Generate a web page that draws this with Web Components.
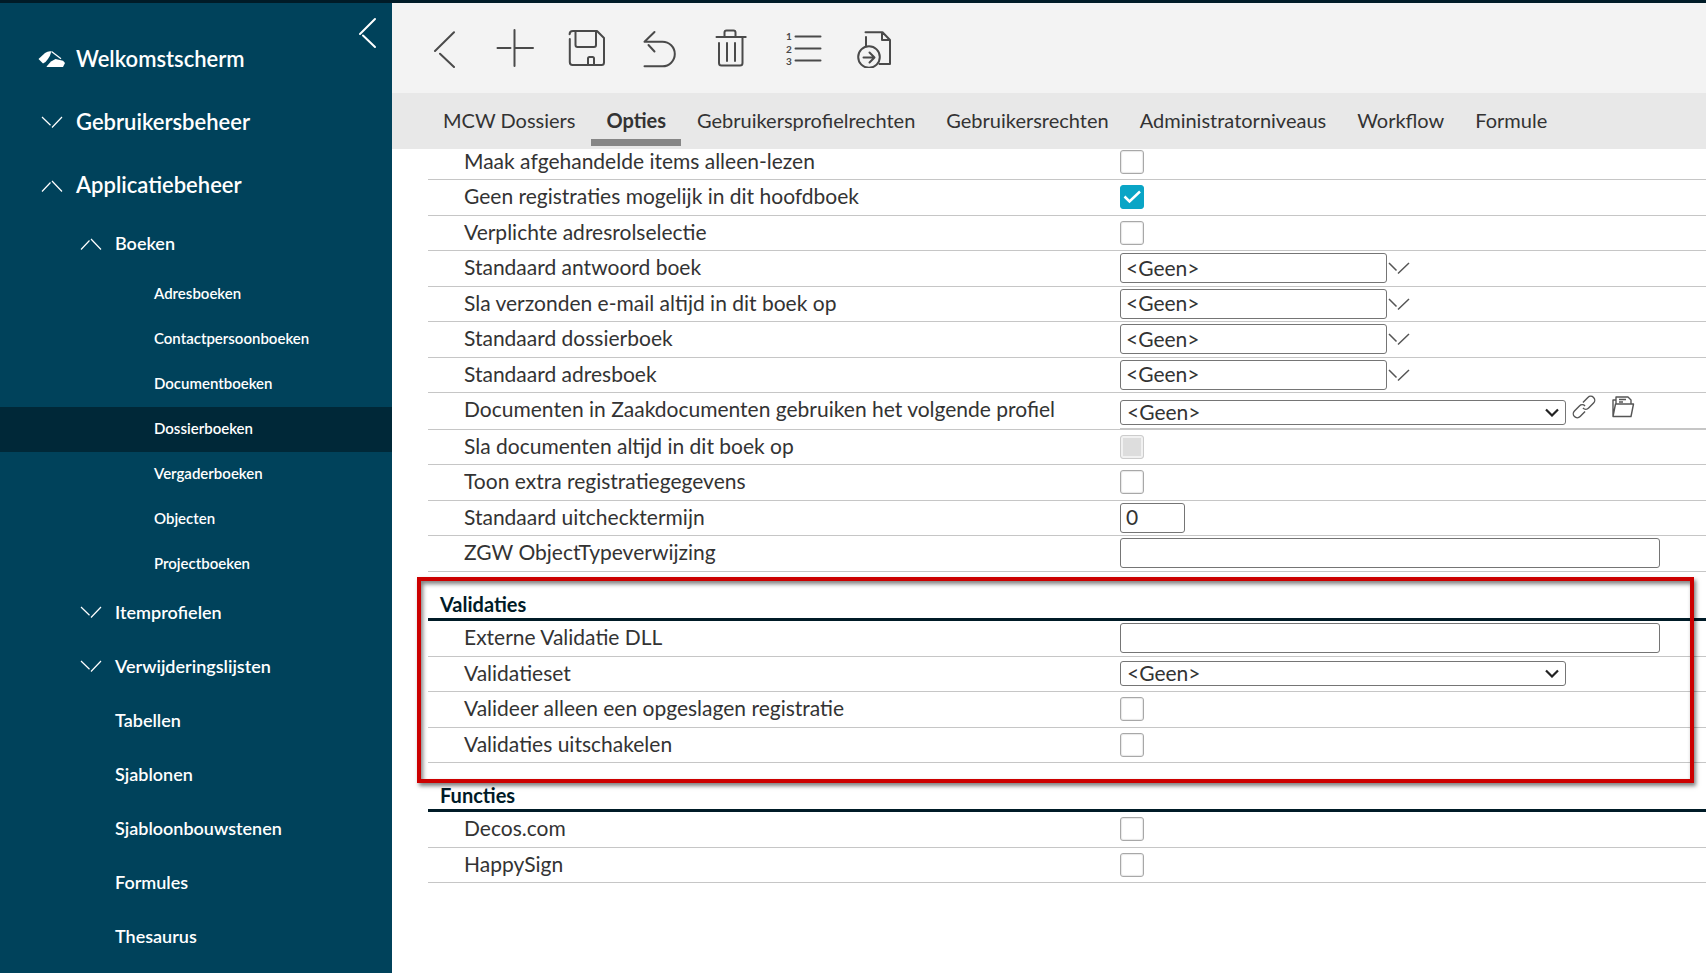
<!DOCTYPE html>
<html lang="nl">
<head>
<meta charset="utf-8">
<title>Dossierboeken - Opties</title>
<style>
  body { margin: 0; font-family: Lato, "Liberation Sans", sans-serif; color: #333; background: #fff; }
</style>
</head>
<body>
<app-shell>
  <side-nav slot="nav">
    <nav-item level="1" mark="logo">Welkomstscherm</nav-item>
    <nav-item level="1" mark="down">Gebruikersbeheer</nav-item>
    <nav-item level="1" mark="up">Applicatiebeheer</nav-item>
    <nav-item level="2" mark="up">Boeken</nav-item>
    <nav-item level="3">Adresboeken</nav-item>
    <nav-item level="3">Contactpersoonboeken</nav-item>
    <nav-item level="3">Documentboeken</nav-item>
    <nav-item level="3" active>Dossierboeken</nav-item>
    <nav-item level="3">Vergaderboeken</nav-item>
    <nav-item level="3">Objecten</nav-item>
    <nav-item level="3">Projectboeken</nav-item>
    <nav-item level="2" mark="down">Itemprofielen</nav-item>
    <nav-item level="2" mark="down">Verwijderingslijsten</nav-item>
    <nav-item level="2">Tabellen</nav-item>
    <nav-item level="2">Sjablonen</nav-item>
    <nav-item level="2">Sjabloonbouwstenen</nav-item>
    <nav-item level="2">Formules</nav-item>
    <nav-item level="2">Thesaurus</nav-item>
  </side-nav>
  <tool-bar slot="tools">
    <tool-button icon="back" label="Terug"></tool-button>
    <tool-button icon="plus" label="Nieuw"></tool-button>
    <tool-button icon="save" label="Opslaan"></tool-button>
    <tool-button icon="undo" label="Ongedaan maken"></tool-button>
    <tool-button icon="trash" label="Verwijderen"></tool-button>
    <tool-button icon="list" label="Volgorde"></tool-button>
    <tool-button icon="export" label="Exporteren"></tool-button>
  </tool-bar>
  <tab-bar slot="tabs">
    <tab-item>MCW Dossiers</tab-item>
    <tab-item active>Opties</tab-item>
    <tab-item>Gebruikersprofielrechten</tab-item>
    <tab-item>Gebruikersrechten</tab-item>
    <tab-item>Administratorniveaus</tab-item>
    <tab-item>Workflow</tab-item>
    <tab-item>Formule</tab-item>
  </tab-bar>
  <option-section>
    <field-row type="check" label="Maak afgehandelde items alleen-lezen"></field-row>
    <field-row type="check" checked label="Geen registraties mogelijk in dit hoofdboek"></field-row>
    <field-row type="check" label="Verplichte adresrolselectie"></field-row>
    <field-row type="lookup" value="&lt;Geen&gt;" label="Standaard antwoord boek"></field-row>
    <field-row type="lookup" value="&lt;Geen&gt;" label="Sla verzonden e-mail altijd in dit boek op"></field-row>
    <field-row type="lookup" value="&lt;Geen&gt;" label="Standaard dossierboek"></field-row>
    <field-row type="lookup" value="&lt;Geen&gt;" label="Standaard adresboek"></field-row>
    <field-row type="select" actions value="&lt;Geen&gt;" label="Documenten in Zaakdocumenten gebruiken het volgende profiel"></field-row>
    <field-row type="check" disabled label="Sla documenten altijd in dit boek op"></field-row>
    <field-row type="check" label="Toon extra registratiegegevens"></field-row>
    <field-row type="short" value="0" label="Standaard uitchecktermijn"></field-row>
    <field-row type="text" label="ZGW ObjectTypeverwijzing"></field-row>
  </option-section>
  <option-section marked>
    <section-title>Validaties</section-title>
    <field-row type="text" label="Externe Validatie DLL"></field-row>
    <field-row type="select" value="&lt;Geen&gt;" label="Validatieset"></field-row>
    <field-row type="check" label="Valideer alleen een opgeslagen registratie"></field-row>
    <field-row type="check" label="Validaties uitschakelen"></field-row>
  </option-section>
  <option-section>
    <section-title>Functies</section-title>
    <field-row type="check" label="Decos.com"></field-row>
    <field-row type="check" label="HappySign"></field-row>
  </option-section>
</app-shell>

<script>
const define = (name, render) => customElements.define(name, class extends HTMLElement {
  constructor() {
    super();
    this.attachShadow({ mode: 'open' });
  }
  connectedCallback() {
    this.shadowRoot.innerHTML = render(this);
  }
});
const esc = s => (s || '').replace(/&/g, '&amp;').replace(/</g, '&lt;').replace(/"/g, '&quot;');

define('app-shell', () => `
  <style>
    :host { display: flex; min-height: 100vh; box-sizing: border-box; border-top: 3px solid #001b27; overflow: hidden; }
    main { flex: 1; min-width: 0; }
    .form { overflow: hidden; }
    /* the list starts slightly scrolled under the tab bar */
    .scrolled { margin-top: -4px; padding-left: 36px; }
  </style>
  <slot name="nav"></slot>
  <main>
    <slot name="tools"></slot>
    <slot name="tabs"></slot>
    <div class="form"><div class="scrolled"><slot></slot></div></div>
  </main>`);

define('side-nav', () => `
  <style>
    :host { display: block; position: relative; flex: none; width: 392px; box-sizing: border-box; padding-top: 26px; background: #00425b; color: #fff; }
    button { position: absolute; top: 12px; right: 12px; padding: 0; border: 0; background: none; width: 24px; height: 36px; }
    svg { display: block; }
  </style>
  <nav><slot></slot></nav>
  <button type="button" aria-label="Menu inklappen"><svg width="24" height="36" fill="none" stroke="#fff" stroke-width="2" stroke-linecap="round"><path d="M19 4L4 19M7 20.500L19 32"/></svg></button>`);

const marks = {
  logo: '<svg width="28" height="18" fill="#fff"><path d="M.5 9L7 3Q10 .8 13 1.200Q13.500 5 7.500 12L5 13.500Z"/><path d="M13.500 1.500L23 8.800" stroke="#fff" stroke-width="1.200"/><path d="M8.500 16.500L13 11.500L17.500 9L25 10.800L27 13L25 17H9Z"/></svg>',
  down: '<svg width="28" height="18" fill="none" stroke="#fff" stroke-width="1.200"><path d="M4 4L12.500 12.300M14 14.500L24 4"/></svg>',
  up: '<svg width="28" height="18" fill="none" stroke="#fff" stroke-width="1.200"><path d="M4 15.500L12.500 6.500M14 5L24 15.500"/></svg>'
};
define('nav-item', el => `
  <style>
    :host { display: block; }
    a { display: flex; align-items: center; box-sizing: border-box; padding-bottom: 4px; color: #fff; text-decoration: none; font-weight: 600; }
    svg { flex: none; margin-right: 10px; }
    :host([level="1"]) a { height: 63px; padding-left: 76px; font-size: 22px; }
    :host([level="2"]) a { height: 54px; padding-left: 115px; font-size: 18px; }
    :host([level="3"]) a { height: 45px; padding-left: 154px; font-size: 15px; }
    :host([level="1"][mark]) a { padding-left: 38px; }
    :host([level="2"][mark]) a { padding-left: 77px; }
    :host([active]) a { background: #002838; }
  </style>
  <a href="#">${marks[el.getAttribute('mark')] || ''}<span><slot></slot></span></a>`);

define('tool-bar', () => `
  <style>
    :host { display: flex; gap: 32px; padding: 25px 32px; background: #f3f3f3; }
  </style>
  <slot></slot>`);

const icons = {
  back: '<path d="M30 4.300L11 23M16 25.700L30 39"/>',
  plus: '<path d="M1.500 20H14.500M18.500 2V38M20 20H37"/>',
  save: '<path d="M1.600 6.300Q1.600 3 5 3H29L36 10V34.500Q36 37 33.500 37H4.500Q1.800 37 1.800 34V11M7.500 3V17Q7.500 19 9.500 19H26Q28 19 28 17V3M20 37V30.500Q20 29 21.500 29H24.500Q26 29 26 30.500V37"/>',
  undo: '<path d="M14.500 4L4.500 13.700H22.500A12.300 12.300 0 0 1 22.500 38.300H4.500M8.500 17L14.500 23.500"/>',
  trash: '<path d="M4.500 9H33.700M12.500 9V4.500Q12.500 2.500 14.500 2.500H21.500Q23.500 2.500 23.500 4.500V9M30.500 10V35Q30.500 37.500 28 37.500H9.500Q7 37.500 7 35V15M15 15V33M23 15V33"/>',
  list: '<path d="M11.500 8.500H36.500M11.500 20.500H36.500M11.500 32.500H36.500"/><g fill="#4a4a4a" stroke="none" font-size="10" font-weight="700"><text x="2" y="12">1</text><text x="2" y="25">2</text><text x="2" y="37">3</text></g>',
  export: '<circle cx="13" cy="29" r="10.800"/><path d="M7.500 29.500H18M13.500 24.500L18.500 29.500L13.500 34.500M10 9V18M9.500 4.300H26.500L34 12V36H23.500M26 4.300V12H34"/>'
};
define('tool-button', el => `
  <style>
    :host { display: block; }
    button { display: block; padding: 0; border: 0; background: none; font: inherit; }
    svg { display: block; }
  </style>
  <button type="button" aria-label="${el.getAttribute('label')}"><svg width="40" height="40" fill="none" stroke="#4a4a4a" stroke-width="2" stroke-linecap="round" stroke-linejoin="round">${icons[el.getAttribute('icon')]}</svg></button>`);

define('tab-bar', () => `
  <style>
    :host { display: flex; gap: 1px; height: 53px; padding: 0 36px 3px; background: #e8e8e8; }
  </style>
  <slot></slot>`);

define('tab-item', el => `
  <style>
    :host { display: block; }
    a { display: block; box-sizing: border-box; height: 53px; padding: 0 15px; border-bottom: 7px solid transparent; color: #333; font-size: 20px; line-height: 54px; text-decoration: none; white-space: nowrap; }
    :host([active]) a { font-weight: 700; border-color: #868686; }
  </style>
  <a href="#"${el.hasAttribute('active') ? ' aria-current="page"' : ''}><slot></slot></a>`);

define('option-section', () => `
  <style>
    :host { display: block; position: relative; }
    ::slotted(field-row) { height: 35px; }
    ::slotted(field-row:nth-child(even)) { height: 36px; }
    ::slotted(field-row[actions]) { height: 37px; }
    :host([marked])::after { content: ""; position: absolute; inset: 5px 12px -20px -11px; border: 4px solid #c00; box-shadow: 2px 3px 4px rgba(0,0,0,.5), inset 2px 3px 4px rgba(0,0,0,.5); pointer-events: none; z-index: 1; }
  </style>
  <slot></slot>`);

define('section-title', () => `
  <style>
    :host { display: block; }
    h2 { margin: 0; padding: 19px 12px 0; height: 27px; border-bottom: 3px solid #001b27; color: #001b27; font-size: 20px; line-height: 27px; font-weight: 700; }
  </style>
  <h2><slot></slot></h2>`);

const controls = {
  check: el => `<input id="f" type="checkbox"${el.hasAttribute('checked') ? ' checked' : ''}${el.hasAttribute('disabled') ? ' disabled' : ''}>`,
  text: () => '<input id="f" type="text" class="wide">',
  short: el => `<input id="f" type="text" class="short" value="${esc(el.getAttribute('value'))}">`,
  lookup: el => `<input id="f" type="text" class="lookup" value="${esc(el.getAttribute('value'))}"><button type="button" aria-label="Kiezen"><svg width="22" height="14" fill="none" stroke="#555" stroke-width="1.500"><path d="M1 2L8.500 9.500M10 12.500L21 2"/></svg></button>`,
  select: el => `<div class="pick"><select id="f"><option>${esc(el.getAttribute('value'))}</option></select><svg class="caret" width="14" height="9" fill="none" stroke="#222" stroke-width="2.200"><path d="M1 1.500L7 7.500L13 1.500"/></svg></div>` + (el.hasAttribute('actions') ? `
    <button type="button" class="link" aria-label="Koppelen"><svg width="24" height="24" fill="none" stroke="#555" stroke-width="1.400"><g transform="rotate(-45 12 12)"><path d="M9.500 16H2.500A4 4 0 0 1 2.500 8H9.500A4 4 0 0 1 13.500 12M14.500 8H21.500A4 4 0 0 1 21.500 16H14.500A4 4 0 0 1 10.500 12"/></g></svg></button>
    <button type="button" class="folder" aria-label="Openen"><svg width="24" height="24" fill="none" stroke="#555" stroke-width="1.400" stroke-linejoin="round"><path d="M2 21V5H5V9M5 5V2H17L20 5V9M8 4.500H15M8 7H12M4.500 9H22.500L20 21.500H2Z"/></svg></button>` : '')
};
define('field-row', el => `
  <style>
    :host { display: flex; box-sizing: border-box; border-bottom: 1px solid #c6c6c6; font-size: 21px; }
    label { flex: 0 1 692px; box-sizing: border-box; padding: 0 0 4px 36px; display: flex; align-items: center; white-space: nowrap; }
    .value { flex: 1; min-width: 0; box-sizing: border-box; padding-bottom: 1px; display: flex; align-items: center; }
    :host([actions]) .value { border-bottom: 1px solid #c6c6c6; padding-top: 4px; }
    :host([actions]) label { padding-bottom: 6px; }
    input, select { box-sizing: border-box; margin: 0; border: 1px solid #757575; border-radius: 3px; background: #fff; color: #333; font: inherit; }
    input[type=text] { height: 30px; padding: 0 5px 2px; }
    .wide { width: 540px; max-width: 94%; }
    .short { width: 65px; }
    .lookup { width: 267px; }
    .pick { position: relative; flex: 0 1 446px; display: flex; }
    select { appearance: none; width: 100%; height: 25px; padding: 0 6px 2px; line-height: 21px; }
    .caret { position: absolute; right: 7px; top: 8px; pointer-events: none; }
    input[type=checkbox] { appearance: none; width: 24px; height: 24px; border: 1px solid #a8a8a8; box-shadow: inset 0 0 1px 1px #e8e8e8; }
    input:checked { border-color: #0aa5c6; box-shadow: none; background: #0aa5c6 url("data:image/svg+xml,%3Csvg xmlns='http://www.w3.org/2000/svg' width='22' height='22' fill='none' stroke='white' stroke-width='2.500'%3E%3Cpath d='M3.500 10.500L8.500 15.500L19 5.500'/%3E%3C/svg%3E"); }
    input[type=checkbox]:disabled { border-color: #ccc; box-shadow: inset 0 0 0 2px #f1f1f1; background: #ddd; }
    button { border: 0; padding: 0; background: none; display: block; }
    button svg { display: block; }
    .lookup + button { margin-left: 1px; }
    .link { margin: 0 0 10px 6px; }
    .folder { margin: 0 0 10px 15px; }
  </style>
  <label for="f">${esc(el.getAttribute('label'))}</label>
  <div class="value">${controls[el.getAttribute('type')](el)}</div>`);
</script>
</body>
</html>
